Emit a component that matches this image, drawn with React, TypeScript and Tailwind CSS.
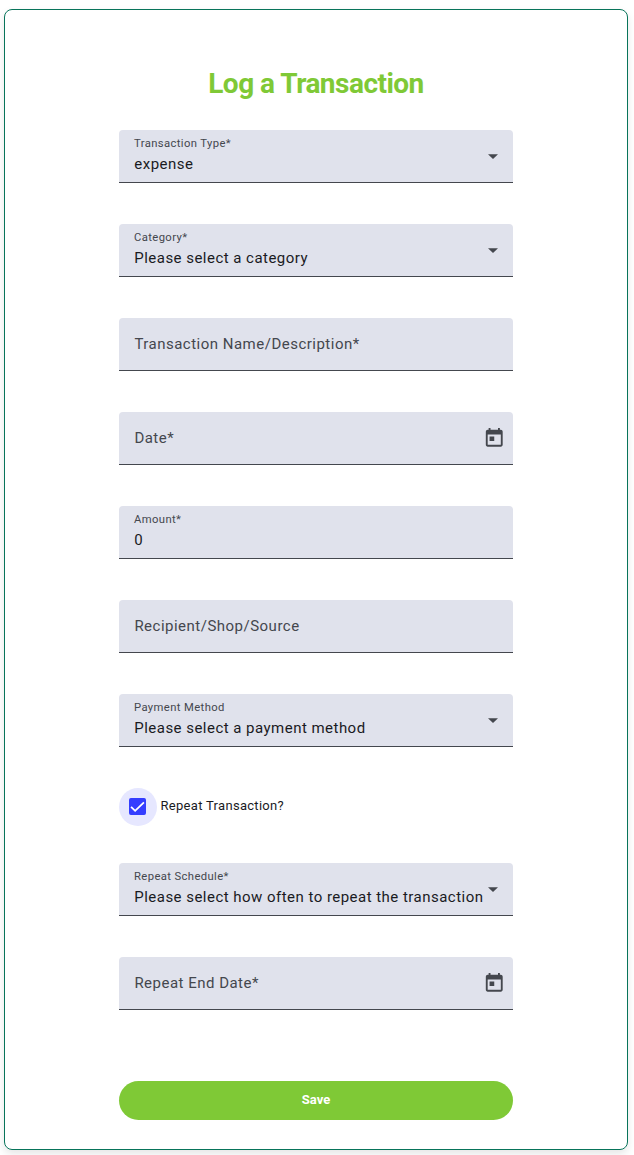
import React from 'react';

type Kind = 'select' | 'date' | 'text';

interface FieldProps {
  label: string;
  value?: string;
  kind?: Kind;
}

function CalendarIcon() {
  return (
    <svg className="size-[22.5px]" viewBox="0 0 24 24" fill="#44474e">
      <path d="M19 3h-1V1h-2v2H8V1H6v2H5c-1.11 0-1.99.9-1.99 2L3 19c0 1.1.89 2 2 2h14c1.1 0 2-.9 2-2V5c0-1.1-.9-2-2-2zm0 16H5V8h14v11zM7 10h5v5H7z" />
    </svg>
  );
}

function Field({ label, value, kind = 'text' }: FieldProps) {
  return (
    <div className="flex h-[53px] items-center justify-between rounded-t-[4px] border-b border-[#44474e] bg-[#e0e2ec] pl-[15px]">
      {value ? (
        <div className="flex flex-col whitespace-nowrap">
          <span className="text-[11.25px] leading-[16px] tracking-[0.39px] text-[#44474e]">{label}</span>
          <span className="pl-[0.3px] text-[15px] leading-[24px] tracking-[0.47px] text-[#1a1b1f]">{value}</span>
        </div>
      ) : (
        <span className="pl-[0.4px] text-[15px] leading-[24px] tracking-[0.49px] text-[#44474e]">{label}</span>
      )}
      {kind === 'select' && (
        <svg className="mt-px mr-[15px] h-[5px] w-[10px] shrink-0" viewBox="0 0 10 5" fill="#44474e">
          <path d="M0 0.2h10L5 5z" />
        </svg>
      )}
      {kind === 'date' && (
        <span className="mt-px mr-[8px]">
          <CalendarIcon />
        </span>
      )}
    </div>
  );
}

export default function App() {
  return (
    <div className="h-[1155px] overflow-hidden bg-white px-[4px] pt-[9px] font-['Roboto',sans-serif]">
      <main className="h-[1141px] w-[624px] rounded-[8px] border border-[#08745a] px-[114px] shadow-[0_4px_8px_rgba(0,0,0,0.1)]">
        <h1 className="mt-[54px] text-center text-[28px] leading-[40px] font-bold tracking-[-0.52px] text-[#7fc936]">Log a Transaction</h1>
        <form className="mt-[26px] flex flex-col">
          <div className="flex flex-col gap-[41px]">
            <Field label="Transaction Type*" value="expense" kind="select" />
            <Field label="Category*" value="Please select a category" kind="select" />
            <Field label="Transaction Name/Description*" />
            <Field label="Date*" kind="date" />
            <Field label="Amount*" value="0" />
            <Field label="Recipient/Shop/Source" />
            <Field label="Payment Method" value="Please select a payment method" kind="select" />
          </div>
          <label className="mt-[41px] flex h-[38px] items-center text-[13px] tracking-[0.3px] text-[#1a1b1f]">
            <span className="flex size-[38px] items-center justify-center rounded-full bg-[#e6e7ff]">
              <svg className="mr-px mb-px size-[17px]" viewBox="0 0 18 18">
                <rect width="18" height="18" rx="2" fill="#343dff" />
                <path d="M2.2 9.4l4.3 4.2L15.8 4.6" fill="none" stroke="white" strokeWidth="1.9" />
              </svg>
            </span>
            <span className="mb-[2px] ml-[3.5px]">Repeat Transaction?</span>
          </label>
          <div className="mt-[37px] flex flex-col gap-[41px]">
            <Field label="Repeat Schedule*" value="Please select how often to repeat the transaction" kind="select" />
            <Field label="Repeat End Date*" kind="date" />
          </div>
          <button type="button" className="mt-[71px] h-[39px] rounded-full bg-[#7fc936] pb-[2px] text-[13px] font-bold text-white">Save</button>
        </form>
      </main>
    </div>
  );
}
